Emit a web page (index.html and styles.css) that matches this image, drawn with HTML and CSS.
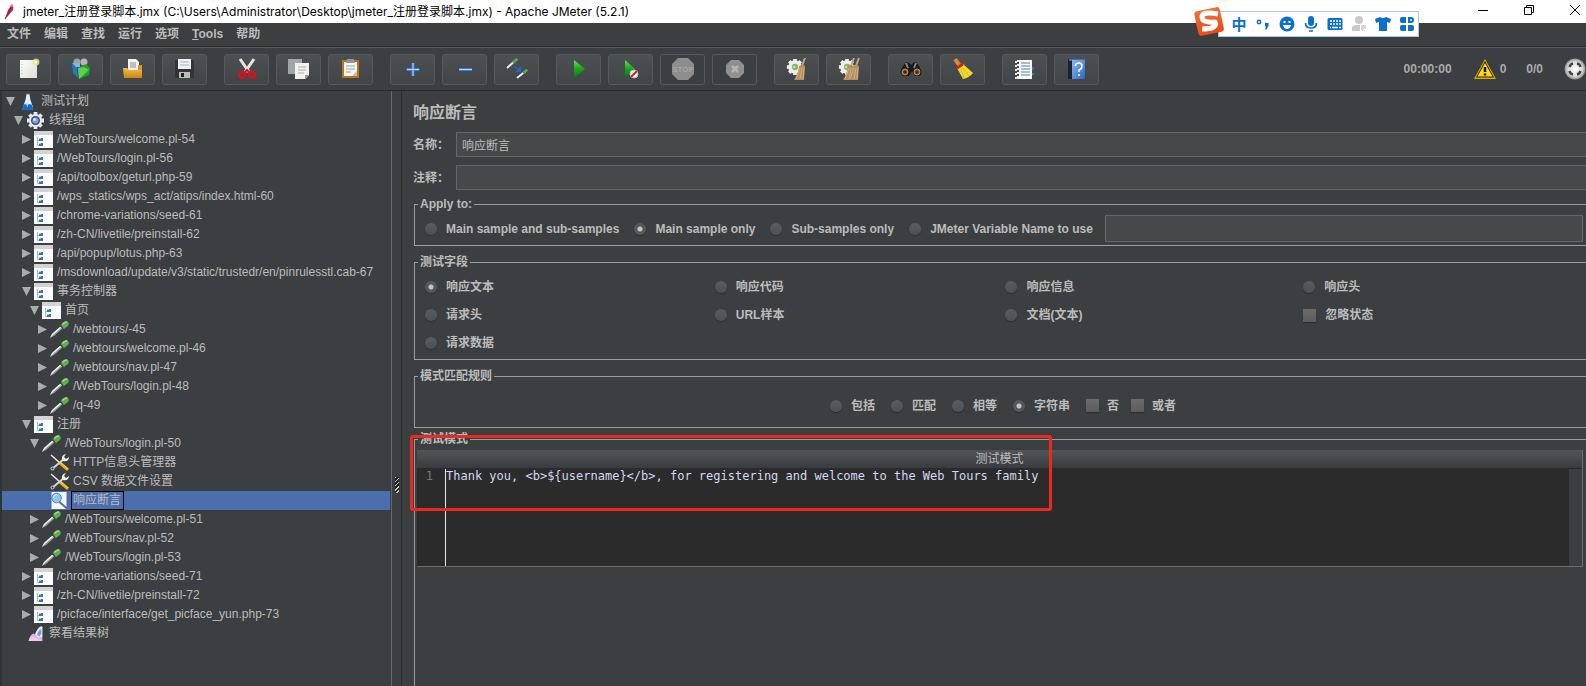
FILE: index.html
```html
<!DOCTYPE html>
<html lang="zh-CN">
<head>
<meta charset="utf-8">
<title>Apache JMeter (5.2.1)</title>
<link rel="stylesheet" href="styles.css">
</head>
<body>
<svg class="sprite" aria-hidden="true">
  <defs>
    <linearGradient id="g-green" x1="0" y1="0" x2="0" y2="1"><stop offset="0" stop-color="#6fdc5a"/><stop offset=".5" stop-color="#19a51b"/><stop offset="1" stop-color="#067a0c"/></linearGradient>
    <linearGradient id="g-folder" x1="0" y1="0" x2="0" y2="1"><stop offset="0" stop-color="#f6bd4a"/><stop offset="1" stop-color="#c98512"/></linearGradient>
    <linearGradient id="g-blue" x1="0" y1="0" x2="1" y2="1"><stop offset="0" stop-color="#8ab8ee"/><stop offset="1" stop-color="#2a66c4"/></linearGradient>
    <linearGradient id="g-page" x1="0" y1="0" x2="1" y2="1"><stop offset="0" stop-color="#ffffff"/><stop offset="1" stop-color="#dcdcd6"/></linearGradient>
    <linearGradient id="g-sogou" x1="0" y1="0" x2="0" y2="1"><stop offset="0" stop-color="#f0703c"/><stop offset="1" stop-color="#ee4a12"/></linearGradient>
    <radialGradient id="g-ball"><stop offset="0" stop-color="#ffffff"/><stop offset=".7" stop-color="#d8d8d8"/><stop offset="1" stop-color="#8c8c8c"/></radialGradient>
    <symbol id="i-folder" viewBox="0 0 19 17"><path d="M0 0h19v17H0z" fill="#fbfcfd"/><path d="M0 0h19v4H0z" fill="#d3d3d5"/><path d="M15 1h3v2h-3z" fill="#ecc9c0"/><path d="M3.500 6v8.500h3M3.500 9.500h3" fill="none" stroke="#9db6cd"/><path d="M5 7h4v3H5zM5 12h4v3H5z" fill="#3b71b0"/><path d="M5 7h2v1H5zM5 12h2v1H5z" fill="#a8c6e8"/></symbol>
    <symbol id="i-dropper" viewBox="0 0 19 17"><path d="M0 17l2-4 9-8 2 2-9 8z" fill="#9a9f9c"/><path d="M0 17l2-4 9-8 1 1L4 13z" fill="#f4f6f4"/><path d="M9.500 4l5 4" stroke="#2d5230" stroke-width="2"/><path d="M11 4q2-4 6-4 3 2 1 5l-4 3z" fill="#5faa54"/><path d="M12.500 3.500q2-2.500 4.500-2.500" stroke="#a4dc8e" fill="none" stroke-width="1.500"/></symbol>
    <symbol id="i-tools" viewBox="0 0 19 17"><path d="M1 1l9 8" stroke="#e9e9e9" stroke-width="1.500"/><path d="M10 9l8 7" stroke="#e7ab14" stroke-width="3"/><path d="M11 9l7 6" stroke="#ffdd55"/><path d="M2 15L14 5" stroke="#d2d5d4" stroke-width="2"/><circle cx="2.500" cy="14.500" r="2" fill="#bfc3c3"/><circle cx="2.500" cy="14.500" r="1" fill="#3c3f41"/><path d="M12 6Q11 1 16 0l-2 3 2 2 3-2q0 5-6 4z" fill="#eceeee"/></symbol>
    <symbol id="i-gear" viewBox="0 0 18 18"><g fill="#e6e8ec"><circle cx="9" cy="9" r="7"/><path d="M7 0h4v18H7zM0 7h18v4H0z"/><path d="M7 0h4v18H7zM0 7h18v4H0z" transform="rotate(45 9 9)"/></g><circle cx="9" cy="9" r="4.800" fill="#3d5480"/><circle cx="9" cy="9" r="3.200" fill="#84a1c8"/><circle cx="8" cy="8" r="1.500" fill="#dce8f5"/></symbol>
    <symbol id="i-flask" viewBox="0 0 12 18"><path d="M5 1h3l1 6 3 9q0 2-2 2H2q-2 0-1-2l3-9z" fill="#e4eef8"/><path d="M2 12h8l2 4q0 2-2 2H2q-2 0-1-2z" fill="#1668c8"/><path d="M4 11h3l-1 4z" fill="#9dd1fa"/><path d="M4 1h5" stroke="#687078"/></symbol>
    <symbol id="i-assert" viewBox="0 0 18 17"><path d="M1 0h15v17H1z" fill="#f4f6f9"/><circle cx="6" cy="6" r="4.800" fill="#8cc9ec" stroke="#5f87a6"/><path d="M3 6q0-3 3-3" stroke="#d8f2ff" fill="none"/><path d="M9 10l8 7" stroke="#5d7182" stroke-width="2"/></symbol>
    <symbol id="i-results" viewBox="0 0 15 16"><path d="M1 15q1-6 5-7l2 2 6 1v4z" fill="#e7aee4"/><path d="M1 15q2-5 6-3l7 3z" fill="#f3cdf0"/><path d="M7 9q2-6 6-8l1 1v9l-4 1z" fill="#dfe9fb"/><path d="M9 9q1-4 4-5v4l-2 3z" fill="#7c9bd8"/></symbol>
    <symbol id="i-cog" viewBox="0 0 20 20"><g fill="#eeeeec"><circle cx="10" cy="10" r="7.500"/><path d="M8 1h4v18H8zM1 8h18v4H1z"/><path d="M8 1h4v18H8zM1 8h18v4H1z" transform="rotate(45 10 10)"/></g><circle cx="10" cy="10" r="3.500" fill="#87b768"/><circle cx="9" cy="10" r="1.500" fill="#b9df9c"/></symbol>
    <symbol id="i-brush" viewBox="0 0 12 22"><path d="M11 0L8 8" stroke="#b9a78c" stroke-width="2"/><path d="M5 8q3-2 6 0l-1 14H0Q4 16 5 8z" fill="#b8905f"/><path d="M6 10L2 21M8 10L6 21M10 10L9 21" stroke="#d2ae7f"/></symbol>
  </defs>
</svg>

<header class="titlebar">
  <svg class="feather" viewBox="0 0 10 16"><path d="M1 15L4 6 8 0q2 2 1 6L4 12z" fill="#c2294b"/><path d="M1 15L8 2" stroke="#6d2464"/><path d="M6 1h3v2H7z" fill="#e98335"/></svg>
  <h1 class="window-title">jmeter_注册登录脚本.jmx (C:\Users\Administrator\Desktop\jmeter_注册登录脚本.jmx) - Apache JMeter (5.2.1)</h1>
  <div class="window-buttons">
    <button aria-label="最小化"><svg viewBox="0 0 10 10"><path d="M0 5.500h10" stroke="#000"/></svg></button>
    <button aria-label="还原"><svg viewBox="0 0 10 10"><path d="M.5 2.500h7v7h-7zM2.500 2.500v-2h7v7h-2" fill="none" stroke="#000"/></svg></button>
    <button aria-label="关闭"><svg viewBox="0 0 10 10"><path d="M0 0l10 10M10 0L0 10" stroke="#000"/></svg></button>
  </div>
</header>

<aside class="ime" aria-label="输入法">
  <svg class="ime-logo" viewBox="0 0 32 31"><rect x="3" y="3" width="26" height="25" rx="3" fill="url(#g-sogou)" transform="rotate(-12 16 15)"/><path d="M25 8Q9 5 9 11t13 5q3 7-13 7" fill="none" stroke="#fff" stroke-width="5" stroke-linejoin="round"/></svg>
  <button class="ime-lang">中</button>
  <button aria-label="标点"><svg viewBox="0 0 16 16"><circle cx="4" cy="6" r="1.700" fill="none" stroke="#0a6fd0" stroke-width="1.500"/><path d="M10 7h3.500v3l-2 3.500H10l1-3h-1z" fill="#0a6fd0"/></svg></button>
  <button aria-label="表情"><svg viewBox="0 0 16 16"><circle cx="8" cy="8" r="7.500" fill="#0a6fd0"/><path d="M4.500 5h2v2h-2zM9.500 5h2v2h-2zM4 9h8q-1 4-4 4T4 9z" fill="#fff"/></svg></button>
  <button aria-label="语音"><svg viewBox="0 0 16 16"><rect x="5" y="0" width="6" height="10" rx="3" fill="#0a6fd0"/><path d="M2.500 7q0 5 5.500 5t5.500-5M6 15h4" fill="none" stroke="#0a6fd0" stroke-width="1.700"/></svg></button>
  <button aria-label="键盘"><svg viewBox="0 0 16 16"><rect x=".5" y="2" width="15" height="12" rx="1.500" fill="#0a6fd0"/><path d="M3 5h2M6 5h2M9 5h2M12 5h2M3 8h2M6 8h2M9 8h2M12 8h2M3 11.500h1M5 11.500h6M12 11.500h2" stroke="#fff" stroke-width="1.500"/></svg></button>
  <button aria-label="账户"><svg viewBox="0 0 16 16"><circle cx="8" cy="4" r="4" fill="#c9c9c9"/><path d="M1 15V12q0-3 4-3h6q3 0 3 3v3z" fill="#c9c9c9"/><path d="M9.500 8.500h6v5h-3v2h-3z" fill="#d5d5d5" stroke="#fff"/></svg></button>
  <button aria-label="皮肤"><svg viewBox="0 0 16 16"><path d="M0 3l5-2q3 2 6 0l5 2-1 4-3-1v9H4V6L1 7z" fill="#0a6fd0"/></svg></button>
  <button aria-label="工具箱"><svg viewBox="0 0 16 16" fill="#0a6fd0"><path d="M1 3q0-2 2-2h4v6H3Q1 7 1 5zM9 1h3q3 0 3 3t-3 3H9zM1 11q0-2 2-2h4v6H3q-2 0-2-2zM9 9h4q2 0 2 2v2q0 2-2 2H9z"/><circle cx="12" cy="4" r="1" fill="#fff"/></svg></button>
</aside>

<nav class="menubar">
  <button>文件</button><button>编辑</button><button>查找</button><button>运行</button><button>选项</button><button><u>T</u>ools</button><button>帮助</button>
</nav>

<div class="toolbar" role="toolbar">
  <div class="tool-group">
    <button aria-label="新建"><svg viewBox="0 0 22 22"><path d="M2 2h17v18H2z" fill="url(#g-page)"/><path d="M4 6v12" stroke="#b5b5b0" stroke-dasharray="1 2"/><circle cx="18" cy="4" r="3.500" fill="#eae68a" opacity=".8"/><circle cx="18" cy="4" r="1.500" fill="#fffbd0"/></svg></button>
    <button aria-label="模板"><svg viewBox="0 0 22 22"><circle cx="7" cy="4" r="3.500" fill="#9aa4a5"/><circle cx="14" cy="4" r="3.500" fill="#b2b8b8"/><path d="M2 6l5 3 1 11-5-5z" fill="#2379c4"/><path d="M2 5h8v4H6z" fill="#7bb9ea"/><path d="M8 10l8-4 4 4-1 7-10 4z" fill="#1fa02b"/><path d="M8 10l6-1 5 3-10 9z" fill="#5dd04f"/></svg></button>
    <button aria-label="打开"><svg viewBox="0 0 22 22"><path d="M6 1h8l3 3v9H6z" fill="#f4f4f2"/><path d="M8 5h6M8 7h6M8 9h6" stroke="#8a8a88"/><path d="M1 10h4l2 2h13v8H2z" fill="url(#g-folder)"/><path d="M16 7h4v5h-4z" fill="#d89726"/></svg></button>
    <button aria-label="保存"><svg viewBox="0 0 22 22"><path d="M1 2h19v18H1z" fill="#323439"/><path d="M4 1h13v10H4z" fill="#edf2f8"/><path d="M6 4h9M6 7h9" stroke="#a1b3c7"/><path d="M5 14h11v6H5z" fill="#b9bcbd"/><path d="M7 15h3v4H7z" fill="#222"/></svg></button>
  </div>
  <div class="tool-group">
    <button aria-label="剪切"><svg viewBox="0 0 22 22"><path d="M4 1l9 13M18 1L9 14" stroke="#e5e5e3" stroke-width="3"/><circle cx="6" cy="17" r="3" fill="none" stroke="#da1118" stroke-width="2.500"/><circle cx="16" cy="17" r="3" fill="none" stroke="#da1118" stroke-width="2.500"/><path d="M8 15l3-3 3 3" fill="none" stroke="#da1118" stroke-width="2"/></svg></button>
    <button aria-label="复制"><svg viewBox="0 0 22 22"><path d="M0 1h14v15H0z" fill="#a3a6a6"/><path d="M7 5h14v12l-4 4H7z" fill="#f1f1ef"/><path d="M10 9h8M10 12h8M10 15h6" stroke="#b0b0ae"/><path d="M17 21v-4h4z" fill="#9b9b99"/></svg></button>
    <button aria-label="粘贴"><svg viewBox="0 0 22 22"><path d="M2 2h17v18H2z" fill="#b97515"/><path d="M4 4h13v14H4z" fill="#f6f6f4"/><path d="M7 1h7l1 4H6z" fill="#8f9598"/><path d="M6 8h9M6 11h9M6 14h5" stroke="#9a9fa9"/><path d="M12 18l5-5v5z" fill="#bcbcbc"/></svg></button>
  </div>
  <div class="tool-group">
    <button aria-label="展开"><svg viewBox="0 0 22 22"><path d="M11 5v13M4.500 11.500h13" stroke="#3d7ddb" stroke-width="3"/><path d="M11 5v13M5 11.500h12" stroke="#b4d4ff"/></svg></button>
    <button aria-label="折叠"><svg viewBox="0 0 22 22"><path d="M5 11.500h13" stroke="#3d7ddb" stroke-width="3"/><path d="M5 11.500h13" stroke="#b4d4ff"/></svg></button>
    <button aria-label="切换"><svg viewBox="0 0 22 22"><path d="M1 10L11 1M11 20l10-8" stroke="#e9ece8" stroke-width="2"/><path d="M7 5l4-4M17 15l4-3" stroke="#5ba345" stroke-width="2.500"/><path d="M8 8l5 4" stroke="#2362d8" stroke-width="1.500"/><path d="M15 8v6H9z" fill="#2362d8"/></svg></button>
  </div>
  <div class="tool-group">
    <button aria-label="启动"><svg viewBox="0 0 22 22"><path d="M6 2l11 9-11 9z" fill="url(#g-green)"/></svg></button>
    <button aria-label="无停顿启动"><svg viewBox="0 0 22 22"><path d="M5 2l10 9-10 9z" fill="url(#g-green)"/><circle cx="14" cy="16" r="4" fill="#e8eef4" stroke="#b6c4cd"/><path d="M11 19l6-6" stroke="#d3231f" stroke-width="2"/></svg></button>
    <button class="off" aria-label="停止" disabled><svg viewBox="0 0 22 22"><path d="M6 0h10l6 6v10l-6 6H6l-6-6V6z" fill="#8e8e8e"/><text class="stop-text" x="11" y="14" text-anchor="middle">STOP</text></svg></button>
    <button class="off" aria-label="关闭" disabled><svg viewBox="0 0 22 22"><path d="M7 2h8l5 5v8l-5 5H7l-5-5V7z" fill="#909090"/><path d="M8 8l6 6M14 8l-6 6" stroke="#b5b5b5" stroke-width="2.500"/></svg></button>
  </div>
  <div class="tool-group">
    <button aria-label="清除"><svg viewBox="0 0 22 22"><use href="#i-cog" width="18" height="18"/><use href="#i-brush" x="8" width="12" height="22"/></svg></button>
    <button aria-label="清除全部"><svg viewBox="0 0 22 22"><use href="#i-cog" width="18" height="18"/><use href="#i-brush" x="5" width="12" height="22"/><use href="#i-brush" x="10" width="12" height="22"/></svg></button>
  </div>
  <div class="tool-group">
    <button aria-label="搜索"><svg viewBox="0 0 22 22"><path d="M3 8l3-4 3 1 2 2 2-2 3-1 3 4 3 6-2 4h-5l-3-5-3 5H3l-3-4z" fill="#17191a"/><path d="M6 5l2 5M16 5l-2 5" stroke="#7d8790" stroke-width="2"/><circle cx="5" cy="14" r="3" fill="#8d5f3b" stroke="#c28a57"/><circle cx="17" cy="14" r="3" fill="#8d5f3b" stroke="#c28a57"/><circle cx="5" cy="14" r="1.500" fill="#3b2717"/><circle cx="17" cy="14" r="1.500" fill="#3b2717"/></svg></button>
    <button aria-label="重置搜索"><svg viewBox="0 0 22 22"><path d="M3 1l5 7" stroke="#d28a34" stroke-width="4"/><path d="M5 10l6-4 10 9q-4 5-10 6z" fill="#f2d82b"/><path d="M9 11l3 9M11 10l6 8" stroke="#d9bd20"/><path d="M5 10l6-4" stroke="#cf2316" stroke-width="3"/></svg></button>
  </div>
  <div class="tool-group">
    <button aria-label="函数助手"><svg viewBox="0 0 22 22"><path d="M3 2h15v19H3z" fill="#fbfcff"/><path d="M7 5h9M7 8h9M7 11h9M7 14h9M7 17h9" stroke="#5078bb"/><path d="M1 4h4M1 8h4M1 12h4M1 16h4M1 20h4" stroke="#e9e9e9" stroke-width="2"/><path d="M3 5h2M3 9h2M3 13h2M3 17h2" stroke="#111" stroke-width="1.500"/><path d="M18 9h2v3h-2z" fill="#3a70cc"/><path d="M18 15h2v2h-2z" fill="#3e9b39"/></svg></button>
    <button aria-label="帮助"><svg viewBox="0 0 22 22"><path d="M2 1l4 1v19H2z" fill="#1a2430"/><path d="M3 1h16v2H3z" fill="#3f6fae"/><path d="M6 2h13v19H6z" fill="url(#g-blue)"/><path d="M9 8q1-3 4-3t3 3-3 4v2M13 16v2" fill="none" stroke="#fff" stroke-width="1.500"/></svg></button>
  </div>
  <div class="status">
    <span class="elapsed">00:00:00</span>
    <button class="warn"><svg viewBox="0 0 22 20"><path d="M11 0l11 20H0z" fill="#d8ab10"/><path d="M11 2l9 16.500H2z" fill="#2d2704"/><path d="M11 4l7.500 13.500h-15z" fill="#ffd91c"/><path d="M11 8v5M11 14.500v2" stroke="#111" stroke-width="2.500"/></svg>0</button>
    <span class="threads">0/0</span>
    <svg class="ball" viewBox="0 0 22 22"><circle cx="11" cy="11" r="10.500" fill="url(#g-ball)"/><path d="M5.500 9q1-3 3.500-3.500M13 5.500q3 .5 3.500 3.500M16.500 13q-1 3-3.500 3.500M9 16.500q-3-.5-3.500-3.500" fill="none" stroke="#444" stroke-width="2.500"/></svg>
  </div>
</div>

<main class="workspace">
  <ul class="tree" role="tree">
    <li class="d0 open"><button aria-label="折叠"></button><svg><use href="#i-flask"/></svg><span>测试计划</span></li>
    <li class="d1 open"><button aria-label="折叠"></button><svg><use href="#i-gear"/></svg><span>线程组</span></li>
    <li class="d2"><button aria-label="展开"></button><svg><use href="#i-folder"/></svg><span>/WebTours/welcome.pl-54</span></li>
    <li class="d2"><button aria-label="展开"></button><svg><use href="#i-folder"/></svg><span>/WebTours/login.pl-56</span></li>
    <li class="d2"><button aria-label="展开"></button><svg><use href="#i-folder"/></svg><span>/api/toolbox/geturl.php-59</span></li>
    <li class="d2"><button aria-label="展开"></button><svg><use href="#i-folder"/></svg><span>/wps_statics/wps_act/atips/index.html-60</span></li>
    <li class="d2"><button aria-label="展开"></button><svg><use href="#i-folder"/></svg><span>/chrome-variations/seed-61</span></li>
    <li class="d2"><button aria-label="展开"></button><svg><use href="#i-folder"/></svg><span>/zh-CN/livetile/preinstall-62</span></li>
    <li class="d2"><button aria-label="展开"></button><svg><use href="#i-folder"/></svg><span>/api/popup/lotus.php-63</span></li>
    <li class="d2"><button aria-label="展开"></button><svg><use href="#i-folder"/></svg><span>/msdownload/update/v3/static/trustedr/en/pinrulesstl.cab-67</span></li>
    <li class="d2 open"><button aria-label="折叠"></button><svg><use href="#i-folder"/></svg><span>事务控制器</span></li>
    <li class="d3 open"><button aria-label="折叠"></button><svg><use href="#i-folder"/></svg><span>首页</span></li>
    <li class="d4"><button aria-label="展开"></button><svg><use href="#i-dropper"/></svg><span>/webtours/-45</span></li>
    <li class="d4"><button aria-label="展开"></button><svg><use href="#i-dropper"/></svg><span>/webtours/welcome.pl-46</span></li>
    <li class="d4"><button aria-label="展开"></button><svg><use href="#i-dropper"/></svg><span>/webtours/nav.pl-47</span></li>
    <li class="d4"><button aria-label="展开"></button><svg><use href="#i-dropper"/></svg><span>/WebTours/login.pl-48</span></li>
    <li class="d4"><button aria-label="展开"></button><svg><use href="#i-dropper"/></svg><span>/q-49</span></li>
    <li class="d2 open"><button aria-label="折叠"></button><svg><use href="#i-folder"/></svg><span>注册</span></li>
    <li class="d3 open"><button aria-label="折叠"></button><svg><use href="#i-dropper"/></svg><span>/WebTours/login.pl-50</span></li>
    <li class="d4 leaf"><svg><use href="#i-tools"/></svg><span>HTTP信息头管理器</span></li>
    <li class="d4 leaf"><svg><use href="#i-tools"/></svg><span>CSV 数据文件设置</span></li>
    <li class="d4 leaf selected"><svg><use href="#i-assert"/></svg><span>响应断言</span></li>
    <li class="d3"><button aria-label="展开"></button><svg><use href="#i-dropper"/></svg><span>/WebTours/welcome.pl-51</span></li>
    <li class="d3"><button aria-label="展开"></button><svg><use href="#i-dropper"/></svg><span>/WebTours/nav.pl-52</span></li>
    <li class="d3"><button aria-label="展开"></button><svg><use href="#i-dropper"/></svg><span>/WebTours/login.pl-53</span></li>
    <li class="d2"><button aria-label="展开"></button><svg><use href="#i-folder"/></svg><span>/chrome-variations/seed-71</span></li>
    <li class="d2"><button aria-label="展开"></button><svg><use href="#i-folder"/></svg><span>/zh-CN/livetile/preinstall-72</span></li>
    <li class="d2"><button aria-label="展开"></button><svg><use href="#i-folder"/></svg><span>/picface/interface/get_picface_yun.php-73</span></li>
    <li class="d1 leaf"><svg><use href="#i-results"/></svg><span>察看结果树</span></li>
  </ul>
  <div class="splitter"><i class="grip"></i></div>

  <form class="panel">
    <h2>响应断言</h2>
    <div class="field"><label for="name">名称：</label><input id="name" type="text" value="响应断言"></div>
    <div class="field"><label for="note">注释：</label><input id="note" type="text"></div>

    <fieldset>
      <legend>Apply to:</legend>
      <div class="apply">
        <label><input type="radio" name="scope">Main sample and sub-samples</label>
        <label><input type="radio" name="scope" checked>Main sample only</label>
        <label><input type="radio" name="scope">Sub-samples only</label>
        <label><input type="radio" name="scope">JMeter Variable Name to use</label>
        <input type="text" aria-label="JMeter Variable Name to use">
      </div>
    </fieldset>

    <fieldset>
      <legend>测试字段</legend>
      <div class="targets">
        <label><input type="radio" name="target" checked>响应文本</label>
        <label><input type="radio" name="target">响应代码</label>
        <label><input type="radio" name="target">响应信息</label>
        <label><input type="radio" name="target">响应头</label>
        <label><input type="radio" name="target">请求头</label>
        <label><input type="radio" name="target">URL样本</label>
        <label><input type="radio" name="target">文档(文本)</label>
        <label><input type="checkbox">忽略状态</label>
        <label><input type="radio" name="target">请求数据</label>
      </div>
    </fieldset>

    <fieldset>
      <legend>模式匹配规则</legend>
      <div class="rules">
        <label><input type="radio" name="rule">包括</label>
        <label><input type="radio" name="rule">匹配</label>
        <label><input type="radio" name="rule">相等</label>
        <label><input type="radio" name="rule" checked>字符串</label>
        <div class="flags">
          <label><input type="checkbox">否</label>
          <label><input type="checkbox">或者</label>
        </div>
      </div>
    </fieldset>

    <fieldset class="patterns">
      <legend>测试模式</legend>
      <div class="pattern-table">
        <div class="pattern-head">测试模式</div>
        <div class="editor">
          <span class="gutter">1</span>
          <textarea aria-label="测试模式" spellcheck="false" wrap="off">Thank you, &lt;b&gt;${username}&lt;/b&gt;, for registering and welcome to the Web Tours family</textarea>
          <i class="scrollbar"></i>
        </div>
      </div>
      <div class="highlight"></div>
    </fieldset>
  </form>
</main>
</body>
</html>
```
FILE: styles.css
```css
* { box-sizing: border-box; }
body {
  margin: 0;
  height: 100vh;
  display: flex;
  flex-direction: column;
  overflow: hidden;
  position: relative;
  background: #3c3f41;
  color: #bbbbbb;
  font: 12px/16px "Liberation Sans", "Noto Sans CJK SC", sans-serif;
}
button, input, textarea { font: inherit; color: inherit; }
button { padding: 0; border: 0; background: none; }
svg { display: block; }
.sprite { position: absolute; width: 0; height: 0; }

/* Title bar */
.titlebar {
  flex: none;
  height: 23px;
  display: flex;
  align-items: center;
  padding-left: 4px;
  background: #fff;
  color: #000;
}
.feather { width: 10px; height: 16px; margin-right: 9px; }
.window-title {
  flex: 1;
  margin: 0;
  font: 12px/22px Inter, "Noto Sans CJK SC", sans-serif;
  white-space: nowrap;
}
.window-buttons { display: flex; align-self: flex-start; gap: 36px; padding: 5px 6px 0 0; }
.window-buttons svg { width: 10px; height: 10px; }

/* Floating input method bar */
.ime {
  position: absolute;
  top: 11px;
  right: 167px;
  height: 26px;
  display: flex;
  align-items: center;
  gap: 8px;
  padding: 0 3px 0 12px;
  background: #fff;
  border: 1px solid #a9cbe4;
}
.ime svg { width: 16px; height: 16px; }
.ime .ime-logo { position: absolute; left: -26px; top: -6px; width: 32px; height: 31px; }
.ime-lang { width: 16px; color: #0a6fd0; font: bold 15px/22px "Noto Sans CJK SC", sans-serif; }

/* Menu bar */
.menubar {
  flex: none;
  height: 24px;
  display: flex;
  align-items: center;
  gap: 13px;
  padding: 0 7px 2px;
  border-bottom: 1px solid #282a2b;
  font-weight: bold;
}

/* Toolbar */
.toolbar {
  flex: none;
  height: 44px;
  display: flex;
  align-items: center;
  gap: 17px;
  padding-left: 6px;
  border-top: 1px solid #555859;
  border-bottom: 1px solid #282a2b;
}
.tool-group { display: flex; gap: 7px; }
.tool-group button {
  width: 45px;
  height: 31px;
  display: grid;
  place-items: center;
  border: 1px solid #55595b;
  border-radius: 3px;
  background: linear-gradient(#4c5052, #414547);
}
.tool-group .off { background: none; }
.tool-group svg { width: 22px; height: 22px; }
.stop-text { font-size: 8px; font-weight: bold; fill: #a5a5a5; }
.status { margin-left: auto; display: flex; align-items: center; font-weight: bold; color: #aaaaaa; }
.warn { display: flex; align-items: center; gap: 4px; margin: 0 20px 0 22px; font-weight: bold; }
.warn svg { width: 22px; height: 20px; }
.ball { width: 22px; height: 22px; margin-left: 21px; }

/* Test plan tree */
.workspace { flex: 1; min-height: 0; display: flex; }
.tree {
  flex: 0 0 392px;
  margin: 0;
  padding: 1px 1px 0 0;
  list-style: none;
  border-left: 2px solid #313335;
  border-right: 1px solid #66696b;
  overflow: hidden;
}
.tree li { height: 19px; display: flex; align-items: center; white-space: nowrap; padding-right: 1px; }
.tree button { width: 9px; height: 9px; background: #a9abac; clip-path: polygon(0 0, 100% 50%, 0 100%); }
.tree .open button { clip-path: polygon(0 0, 100% 0, 50% 100%); }
.tree svg { width: 19px; height: 17px; margin: 0 2px 0 3px; }
.tree span { padding: 0 1px; border: 1px solid transparent; line-height: 17px; }
.d0 { padding-left: 4px; }
.d1 { padding-left: 12px; }
.d2 { padding-left: 20px; }
.d3 { padding-left: 28px; }
.d4 { padding-left: 36px; }
.leaf::before { content: ""; width: 9px; }
.tree .selected { background: #4b6eaf; }
.tree .selected span { border-color: #000; padding-right: 2px; }

.splitter { flex: 0 0 10px; display: flex; flex-direction: column; align-items: center; border-right: 1px solid #2b2d2e; }
.splitter::before { content: ""; flex: 2; }
.splitter::after { content: ""; flex: 1; }
.grip { width: 4px; height: 16px; background: repeating-linear-gradient(135deg, #c8c8c8 0 1px, #222 1px 3px); }

/* Assertion panel */
.panel {
  flex: 1;
  min-width: 0;
  display: flex;
  flex-direction: column;
  padding: 10px 0 0 11px;
  margin-right: -3px;
  font-weight: bold;
}
.panel h2 { margin: 0 0 7px; font-size: 16px; line-height: 24px; }
.field { display: flex; align-items: center; margin-bottom: 8px; }
.field + .field { margin-bottom: 6px; }
.field label { width: 43px; flex: none; }
input[type="text"] {
  flex: 1;
  min-width: 0;
  height: 25px;
  padding: 0 5px;
  border: 1px solid #646767;
  background: #45494a;
  font-weight: normal;
}
fieldset { min-width: 0; margin: 0 0 8px 1px; padding: 0 5px 0 2px; border: 1px solid #9a9c9d; }
legend { margin-left: 1px; padding: 0 2px; line-height: 16px; }
.panel fieldset label { display: flex; align-items: center; gap: 9px; white-space: nowrap; }

input[type="radio"], input[type="checkbox"] {
  appearance: none;
  flex: none;
  width: 12px;
  height: 12px;
  margin: 0;
  background: linear-gradient(#5a5d5f, #4d5052);
  box-shadow: 0 1px 1px #2c2e2f;
}
input[type="radio"] { border-radius: 50%; }
input[type="radio"]:checked { background: radial-gradient(circle, #c4c4c4 0 2px, #55585a 3px); }
input[type="checkbox"] { width: 13px; height: 13px; background: linear-gradient(#6b6b6b, #5c5c5c); }

.apply { display: flex; align-items: center; gap: 15px; padding: 3px 0 3px 8px; }
.apply input[type="text"] { height: 27px; margin-left: -3px; }
.targets {
  display: grid;
  grid-template-columns: 290fr 291fr 298fr 280fr;
  grid-auto-rows: 28px;
  padding: 3px 0 2px 8px;
}
.rules { height: 43px; display: flex; align-items: center; justify-content: center; gap: 16px; padding-left: 6px; }
.flags { display: flex; gap: 12px; }
.flags label:first-child, .flags label:last-child { gap: 8px; }
.patterns { position: relative; flex: 1; margin: -5px 0 0 1px; border-bottom: 0; }
.pattern-table { margin-top: 3px; border: 1px solid #6b6e6f; border-width: 0 1px 1px 0; }
.pattern-head {
  height: 18px;
  line-height: 18px;
  text-align: center;
  font-weight: normal;
  background: linear-gradient(#515557, #393c3e);
}
.editor { display: flex; height: 98px; padding-top: 1px; background: #2b2b2b; }
.gutter { width: 28px; padding-right: 12px; text-align: right; color: #777; font: 12px/14px "DejaVu Sans Mono", monospace; }
.editor textarea {
  flex: 1;
  min-width: 0;
  margin: 0;
  padding: 0;
  border: 0;
  border-left: 1px solid #e8e8e8;
  outline: 0;
  resize: none;
  overflow: hidden;
  background: none;
  color: #cfd8f3;
  font: 12px/14px "DejaVu Sans Mono", monospace;
}
.scrollbar { width: 13px; background: #3c3f41; }
.highlight {
  position: absolute;
  left: -5px;
  top: -12px;
  width: 642px;
  height: 76px;
  border: 3px solid #ec2a1c;
  border-radius: 3px;
  pointer-events: none;
}
```
